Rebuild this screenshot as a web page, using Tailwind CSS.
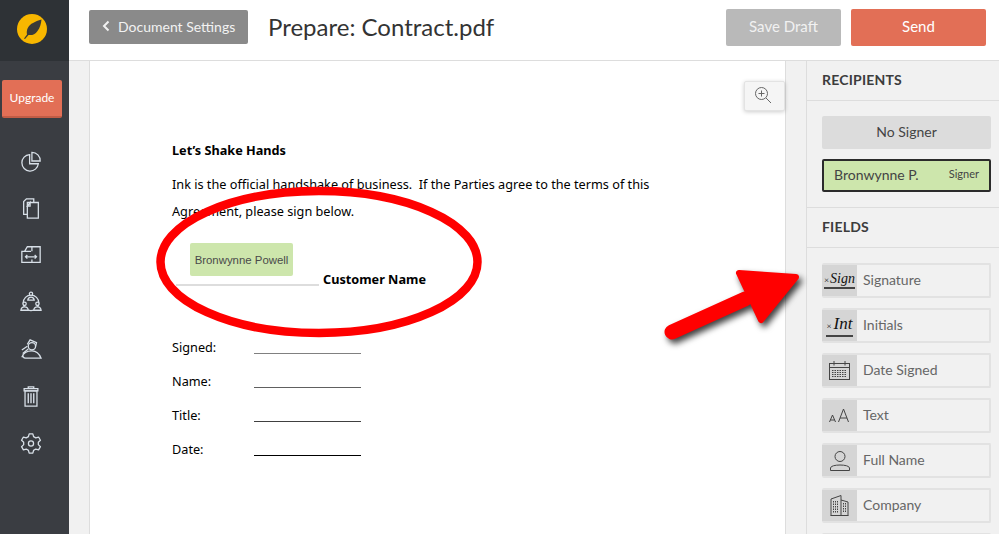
<!DOCTYPE html>
<html lang="en">
<head>
    <meta charset="UTF-8">
    <meta name="viewport" content="width=device-width, initial-scale=1.0">
    <title>Prepare: Contract.pdf</title>
    <script src="https://cdn.jsdelivr.net/npm/@tailwindcss/browser@4"></script>
</head>
<body class="h-[534px] w-[999px] overflow-hidden bg-white font-['Lato',sans-serif]">
<div class="relative flex h-[534px] w-[999px] overflow-hidden">

    <!-- Sidebar -->
    <aside class="flex w-[69px] shrink-0 flex-col items-center bg-[#3a3d42] pr-[5px]">
        <div class="-mr-[5px] flex h-[61px] w-[69px] shrink-0 items-center justify-center bg-[#2e3236] pb-[4px] pr-[5px]">
            <svg width="30" height="30" viewBox="0 0 30 30">
                <circle cx="15" cy="15" r="15" fill="#f8b700"/>
                <path d="M7 24.500 L10 20.500 C9 15.500 11.500 11 16 9 C18.500 7.500 21 6.500 24.500 5.500 C24 10 23 14 20.500 17 C18 20.500 15 21.500 11.500 21 L8 25 Z" fill="#3a3a38"/>
            </svg>
        </div>
        <div class="mt-[19px] flex h-[38px] w-[60px] shrink-0 items-center justify-center rounded-[2px] border-b-2 border-[#c25c45] bg-[#e26f56] text-[12px] text-white">Upgrade</div>
        <div class="-ml-[2px] mt-[32px] flex flex-col items-center gap-[25px] text-[#d8e0e8]">
            <svg width="22" height="22" viewBox="0 0 24 24" fill="none" stroke="currentColor" stroke-width="1.4">
                <path d="M10.500 5 A9 9 0 1 0 20 15 L10.500 15 Z"/><path d="M13 2.500 A9 9 0 0 1 22 12 L13 12 Z"/>
            </svg>
            <svg width="22" height="22" viewBox="0 0 24 24" fill="none" stroke="currentColor" stroke-width="1.4">
                <path d="M8 19 H4 V5 L7 2 H15 V6"/><path d="M8 6 H20 V23 H8 Z"/><path d="M8 10 L11 6 V10 Z"/>
            </svg>
            <svg width="22" height="22" viewBox="0 0 24 24" fill="none" stroke="currentColor" stroke-width="1.4">
                <path d="M5 8 L8 3 H22 V20 H2 V8 H12"/><path d="M6 14 H18 M8 12 L6 14 L8 16 M16 12 L18 14 L16 16"/><path d="M13 3 V8 M13 17 V20"/>
            </svg>
            <svg width="22" height="22" viewBox="0 0 24 24" fill="none" stroke="currentColor" stroke-width="1.4">
                <circle cx="12" cy="13" r="8.500"/>
                <circle cx="12" cy="3" r="1.800" fill="#3a3d42"/><path d="M8.500 10 C9 5.500 15 5.500 15.500 10 Z" fill="#3a3d42"/>
                <circle cx="5" cy="14" r="1.800" fill="#3a3d42"/><path d="M1 21 C1.500 16 8.500 16 9 21 Z" fill="#3a3d42"/>
                <circle cx="19" cy="14" r="1.800" fill="#3a3d42"/><path d="M15 21 C15.500 16 22.500 16 23 21 Z" fill="#3a3d42"/>
            </svg>
            <svg width="22" height="22" viewBox="0 0 24 24" fill="none" stroke="currentColor" stroke-width="1.4">
                <circle cx="13" cy="9" r="4"/><path d="M8 7 L11 2 L18 5 L17 9"/><path d="M2 13 L8 9 M3 17 L9 12"/>
                <path d="M2 21 C4 15 9 14 13 14 C18 14 21 17 23 22 H6 C4 22 2 20 4 17"/>
            </svg>
            <svg width="22" height="22" viewBox="0 0 24 24" fill="none" stroke="currentColor" stroke-width="1.4">
                <path d="M4.500 4 H19.500 V6.500 H4.500 Z M9 4 V2 H15 V4"/><path d="M5.500 6.500 H18.500 V23 H5.500 Z"/><path d="M9 9 V20 M12 9 V20 M15 9 V20" stroke-width="1.500"/>
            </svg>
            <svg width="22" height="22" viewBox="0 0 24 24" fill="none" stroke="currentColor" stroke-width="1.4">
                <path d="M10 2 H14 L14.800 5 L17.200 6.400 L20.300 5.500 L22.300 9 L20 11.200 V13.800 L22.300 16 L20.300 19.500 L17.200 18.600 L14.800 20 L14 23 H10 L9.200 20 L6.800 18.600 L3.700 19.500 L1.700 16 L4 13.800 V11.200 L1.700 9 L3.700 5.500 L6.800 6.400 L9.200 5 Z" stroke-linejoin="round"/>
                <circle cx="12" cy="12.500" r="2.800"/>
            </svg>
        </div>
    </aside>

    <div class="flex min-w-0 flex-1 flex-col">
        <!-- Top bar -->
        <header class="flex h-[61px] shrink-0 items-center border-b border-[#dddddd] pb-[6px] pl-[20px] pr-[13px]">
            <div class="flex h-[34px] w-[159px] items-center rounded-[2px] bg-[#8a8a8a] pb-[2px] pl-[13px] text-[14px] text-[#f2f2f2]">
                <svg width="8" height="12" viewBox="0 0 8 12" fill="none" stroke="#f2f2f2" stroke-width="2" class="mr-[8px]"><path d="M6.500 1.500 L2 6 L6.500 10.500"/></svg>
                Document Settings
            </div>
            <h1 class="ml-[20px] text-[24px] leading-none text-[#333333]">Prepare: Contract.pdf</h1>
            <div class="ml-auto flex gap-[10px] text-[15px] text-white">
                <div class="flex h-[37px] w-[115px] items-center justify-center rounded-[2px] bg-[#b9b9b9] pb-[2px] text-[#f1f1f1]">Save Draft</div>
                <div class="flex h-[37px] w-[135px] items-center justify-center rounded-[2px] bg-[#e26f56] pb-[2px]">Send</div>
            </div>
        </header>

        <div class="flex min-h-0 flex-1">
            <!-- Document -->
            <div class="w-[20px] shrink-0 bg-[#f1f1f1]"></div>
            <main class="relative w-[697px] shrink-0 border-x border-[#dddddd] bg-white pl-[82px] pt-[80px] font-['Noto_Sans',sans-serif] text-[12.7px] text-black">
                <button class="absolute right-0 top-[20px] flex h-[30px] w-[41px] items-center justify-center rounded-[2px] border border-[#e3e3e3] bg-[#f5f5f5] pb-[2px] pr-[4px] shadow-[0_1px_4px_rgba(0,0,0,0.2)]">
                    <svg width="18" height="18" viewBox="0 0 18 18" fill="none" stroke="#666666" stroke-width="1"><circle cx="7.500" cy="7.500" r="6"/><path d="M7.500 4.500 V10.500 M4.500 7.500 H10.500 M12 12 L17 17"/></svg>
                </button>
                <p class="h-[19px] font-bold leading-[19px]">Let’s Shake Hands</p>
                <p class="mt-[15px] h-[19px] leading-[19px] whitespace-pre">Ink is the official handshake of business.  If the Parties agree to the terms of this</p>
                <p class="mt-[8px] h-[19px] leading-[19px]">Agreement, please sign below.</p>
                <div class="relative mt-[22px] h-[43px]">
                    <div class="ml-[18px] flex h-[33px] w-[103px] items-center justify-center rounded-[2px] bg-[#cde6ac] pt-[2px] font-['Liberation_Sans',sans-serif] text-[11.4px] text-[#4a4a4a]">Bronwynne Powell</div>
                    <div class="absolute left-[4px] top-[41px] h-[2px] w-[143px] bg-[#dddddd]"></div>
                    <div class="absolute left-[151px] top-[27px] font-bold leading-[19px]">Customer Name</div>
                </div>
                <div class="mt-[52px] flex flex-col gap-[15px] leading-[19px]">
                    <div class="flex h-[19px]"><span class="w-[82px]">Signed:</span><span class="h-[16px] w-[107px] border-b border-[#808080]"></span></div>
                    <div class="flex h-[19px]"><span class="w-[82px]">Name:</span><span class="h-[16px] w-[107px] border-b border-[#606060]"></span></div>
                    <div class="flex h-[19px]"><span class="w-[82px]">Title:</span><span class="h-[16px] w-[107px] border-b border-[#404040]"></span></div>
                    <div class="flex h-[19px]"><span class="w-[82px]">Date:</span><span class="h-[16px] w-[107px] border-b border-black"></span></div>
                </div>
            </main>
            <div class="w-[20px] shrink-0 bg-[#f1f1f1]"></div>

            <!-- Right panel -->
            <section class="min-w-0 flex-1 border-l border-[#dddddd] bg-[#f1f1f1] text-[#444444]">
                <h2 class="flex h-[40px] items-center border-b border-[#dddddd] pb-[2px] pl-[15px] text-[14px] font-bold tracking-[0.2px] text-[#3c3c3c]">RECIPIENTS</h2>
                <div class="h-[107px] border-b border-[#dddddd] pl-[15px] pr-[8px] pt-[15px]">
                    <div class="flex h-[33px] items-center justify-center rounded-[2px] bg-[#dcdcdc] pb-[2px] text-[14px]">No Signer</div>
                    <div class="mt-[10px] flex h-[33px] items-center justify-between rounded-[2px] border-2 border-[#2b2b2b] bg-[#cde6ac] pb-[2px] pl-[10px] pr-[10px]">
                        <span class="text-[14px]">Bronwynne P.</span><span class="text-[11px]">Signer</span>
                    </div>
                </div>
                <h2 class="flex h-[40px] items-center border-b border-[#dddddd] pb-[2px] pl-[15px] text-[14px] font-bold tracking-[0.2px] text-[#3c3c3c]">FIELDS</h2>
                <div class="flex flex-col gap-[10px] pl-[15px] pr-[8px] pt-[15px] text-[14px] text-[#666666]">
                    <div class="flex h-[35px] overflow-hidden rounded-[2px] border-2 border-l-0 border-[#e2e2e2]">
                        <div class="flex w-[35px] shrink-0 items-center justify-center bg-[#d5d5d5]">
                            <span class="flex items-baseline border-b-2 border-[#444444] font-['Liberation_Serif',serif] text-[14px] italic leading-[14px] text-[#111111]"><span class="mr-[1px] text-[9px] not-italic">×</span>Sign</span>
                        </div>
                        <span class="flex items-center pb-[2px] pl-[6px]">Signature</span>
                    </div>
                    <div class="flex h-[35px] overflow-hidden rounded-[2px] border-2 border-l-0 border-[#e2e2e2]">
                        <div class="flex w-[35px] shrink-0 items-center justify-center bg-[#d5d5d5]">
                            <span class="flex items-baseline border-b-2 border-[#444444] px-[1px] font-['Liberation_Serif',serif] text-[17px] italic leading-[17px] text-[#111111]"><span class="mr-[2px] text-[9px] not-italic">×</span>Int</span>
                        </div>
                        <span class="flex items-center pb-[2px] pl-[6px]">Initials</span>
                    </div>
                    <div class="flex h-[35px] overflow-hidden rounded-[2px] border-2 border-l-0 border-[#e2e2e2]">
                        <div class="flex w-[35px] shrink-0 items-center justify-center bg-[#d5d5d5]">
                            <svg width="21" height="19" viewBox="0 0 21 19" fill="none" stroke="#444444"><rect x="0.500" y="2.500" width="20" height="16"/><path d="M0.500 6.500 H20.500 M5 0 V4.500 M16 0 V4.500"/><path d="M3 9.500 H18 M3 11.500 H18 M3 13.500 H18 M3 15.500 H18" stroke-dasharray="1.500 1"/></svg>
                        </div>
                        <span class="flex items-center pb-[2px] pl-[6px]">Date Signed</span>
                    </div>
                    <div class="flex h-[35px] overflow-hidden rounded-[2px] border-2 border-l-0 border-[#e2e2e2]">
                        <div class="flex w-[35px] shrink-0 items-center justify-center bg-[#d5d5d5]">
                            <svg width="21" height="15" viewBox="0 0 21 15" fill="none" stroke="#444444"><path d="M0.500 14 L3.500 7 L6.500 14 M1.500 12 H5.500"/><path d="M9.500 14 L14.500 1 L19.500 14 M11 10 H18"/></svg>
                        </div>
                        <span class="flex items-center pb-[2px] pl-[6px]">Text</span>
                    </div>
                    <div class="flex h-[35px] overflow-hidden rounded-[2px] border-2 border-l-0 border-[#e2e2e2]">
                        <div class="flex w-[35px] shrink-0 items-center justify-center bg-[#d5d5d5]">
                            <svg width="20" height="20" viewBox="0 0 20 20" fill="none" stroke="#444444"><circle cx="10" cy="5.500" r="5"/><path d="M0.500 19.500 V17 C0.500 13 19.500 13 19.500 17 V19.500 Z"/></svg>
                        </div>
                        <span class="flex items-center pb-[2px] pl-[6px]">Full Name</span>
                    </div>
                    <div class="flex h-[35px] overflow-hidden rounded-[2px] border-2 border-l-0 border-[#e2e2e2]">
                        <div class="flex w-[35px] shrink-0 items-center justify-center bg-[#d5d5d5]">
                            <svg width="19" height="21" viewBox="0 0 19 21" fill="none" stroke="#444444"><path d="M0.500 20.500 H18.500"/><path d="M1 20.500 V4 L11 0.500 V20.500 M11 5 L18 7 V20.500"/><path d="M3.500 6 V18 M5.500 6 V18 M7.500 6 V18 M13.500 8 V18 M15.500 8 V18" stroke-dasharray="1.500 1"/></svg>
                        </div>
                        <span class="flex items-center pb-[2px] pl-[6px]">Company</span>
                    </div>
                    <div class="h-[35px] rounded-[2px] border-2 border-[#e2e2e2]"></div>
                </div>
            </section>
        </div>
    </div>

    <!-- Red annotations drawn over the screenshot -->
    <svg class="pointer-events-none absolute left-0 top-0" width="999" height="534" viewBox="0 0 999 534" fill="none">
        <ellipse cx="319" cy="262" rx="158.500" ry="71" stroke="#ff0000" stroke-width="8.500"/>
        <g class="drop-shadow-[3px_4px_3px_rgba(0,0,0,0.75)]">
            <path d="M672 332 L745 299" stroke="#ff0000" stroke-width="15" stroke-linecap="round"/>
            <path d="M739 273 L796 277 L761 320 Z" fill="#ff0000" stroke="#ff0000" stroke-width="6" stroke-linejoin="round"/>
        </g>
    </svg>
</div>
</body>
</html>
